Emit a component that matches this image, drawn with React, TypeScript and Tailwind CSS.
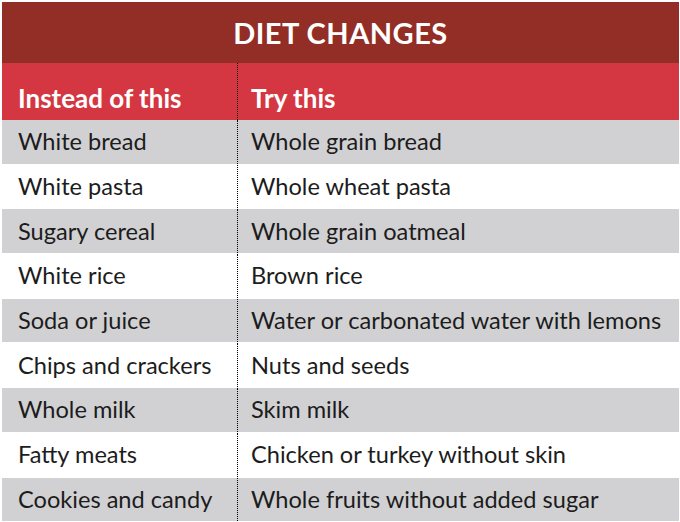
const rows: [string, string][] = [
  ['White bread', 'Whole grain bread'],
  ['White pasta', 'Whole wheat pasta'],
  ['Sugary cereal', 'Whole grain oatmeal'],
  ['White rice', 'Brown rice'],
  ['Soda or juice', 'Water or carbonated water with lemons'],
  ['Chips and crackers', 'Nuts and seeds'],
  ['Whole milk', 'Skim milk'],
  ['Fatty meats', 'Chicken or turkey without skin'],
  ['Cookies and candy', 'Whole fruits without added sugar'],
]

export default function App() {
  return (
    <div className="w-[680px] h-[522px] bg-white pl-[2px] pt-[2px] pr-[1px] overflow-hidden font-['Lato',sans-serif]">
      <div className="h-[61px] bg-[#922e25] flex items-center justify-center">
        <h1 className="text-white font-bold text-[29px] tracking-[0.5px]">DIET CHANGES</h1>
      </div>
      <div className="h-[57px] bg-[#d43742] flex text-white font-bold text-[26px] leading-none">
        <div className="w-[235px] pl-4 pt-[22px]">Instead of this</div>
        <div className="flex-1 border-l border-dotted border-black pl-[13px] pt-[22px]">Try this</div>
      </div>
      {rows.map(([from, to], i) => (
        <div
          key={from}
          className={`h-[44.7px] flex items-center text-[23.6px] text-[#1c1c1c] border-b border-white ${i % 2 === 0 ? 'bg-[#d1d1d3]' : 'bg-white'}`}
        >
          <div className="w-[235px] pl-4 self-stretch flex items-center">{from}</div>
          <div className="flex-1 self-stretch flex items-center border-l border-dotted border-black pl-[13px]">{to}</div>
        </div>
      ))}
    </div>
  )
}
